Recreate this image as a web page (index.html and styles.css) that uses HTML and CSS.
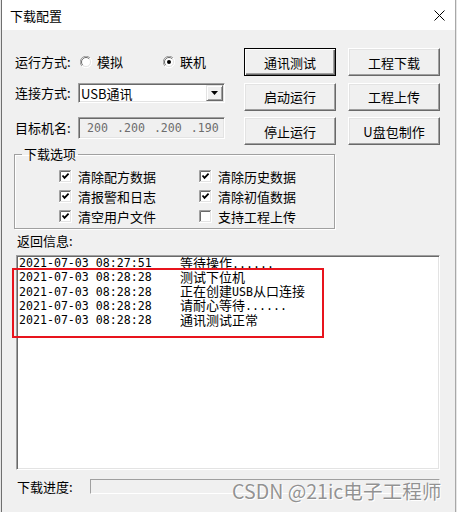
FILE: index.html
```html
<!doctype html>
<html lang="zh-CN">
<head>
<meta charset="utf-8" />
<title>下载配置</title>
<link rel="stylesheet" href="styles.css">
</head>
<body>
  <!-- 公用图形 -->
  <svg class="sprite" aria-hidden="true">
    <symbol id="cb" viewBox="0 0 13 13">
      <path d="M0.5 12 V0.5 H12" fill="none" stroke="#a0a0a0"/>
      <path d="M1.5 11 V1.5 H11" fill="none" stroke="#696969"/>
      <path d="M0 12.5 H12.5 V0" fill="none" stroke="#fff"/>
      <path d="M1 11.5 H11.5 V1" fill="none" stroke="#e3e3e3"/>
      <rect x="2" y="2" width="9" height="9" fill="#fff"/>
    </symbol>
    <symbol id="tick" viewBox="0 0 13 13">
      <path d="M3.5 5.5 L5.5 7.8 L9.6 3.6" fill="none" stroke="#000" stroke-width="1.8"/>
    </symbol>
    <symbol id="radio" viewBox="0 0 12 12">
      <circle cx="6" cy="6" r="5" fill="#fff"/>
      <path d="M1.9 10.1 A5.5 5.5 0 0 1 10.1 1.9" fill="none" stroke="#a0a0a0"/>
      <path d="M2.8 9.2 A4.5 4.5 0 0 1 9.2 2.8" fill="none" stroke="#696969"/>
      <path d="M10.1 1.9 A5.5 5.5 0 0 1 1.9 10.1" fill="none" stroke="#fff"/>
      <path d="M9.2 2.8 A4.5 4.5 0 0 1 2.8 9.2" fill="none" stroke="#e3e3e3"/>
    </symbol>
  </svg>

  <div class="window">
    <div class="titlebar">
      <span>下载配置</span>
      <svg class="close" width="11" height="11" viewBox="0 0 11 11"><path d="M0.5 0.5 L10.5 10.5 M10.5 0.5 L0.5 10.5" stroke="#000"/></svg>
    </div>

    <div class="client">
      <div class="top">
        <div class="form">
          <div class="row row1">
            <span class="label">运行方式:</span>
            <span class="option">
              <svg class="radio" width="12" height="12"><use href="#radio"/></svg>模拟
            </span>
            <span class="option">
              <svg class="radio" width="12" height="12"><use href="#radio"/><circle cx="6" cy="6" r="2" fill="#000"/></svg>联机
            </span>
          </div>
          <div class="row row2">
            <span class="label">连接方式:</span>
            <div class="combo">
              <span>USB通讯</span>
              <span class="drop"><svg width="7" height="4" viewBox="0 0 7 4"><path d="M0 0 H7 L3.5 4 Z" fill="#000"/></svg></span>
            </div>
          </div>
          <div class="row row3">
            <span class="label">目标机名:</span>
            <div class="ip">
              <span>200</span><span>.200</span><span>.200</span><span>.190</span>
            </div>
          </div>
        </div>

        <div class="buttons">
          <div class="btn default">通讯测试</div>
          <div class="btn">工程下载</div>
          <div class="btn">启动运行</div>
          <div class="btn">工程上传</div>
          <div class="btn">停止运行</div>
          <div class="btn">U盘包制作</div>
        </div>
      </div>

      <fieldset class="group">
        <legend>下载选项</legend>
        <div class="opts">
          <div class="opt"><svg width="13" height="13"><use href="#cb"/><use href="#tick"/></svg>清除配方数据</div>
          <div class="opt"><svg width="13" height="13"><use href="#cb"/><use href="#tick"/></svg>清除历史数据</div>
          <div class="opt"><svg width="13" height="13"><use href="#cb"/><use href="#tick"/></svg>清报警和日志</div>
          <div class="opt"><svg width="13" height="13"><use href="#cb"/><use href="#tick"/></svg>清除初值数据</div>
          <div class="opt"><svg width="13" height="13"><use href="#cb"/><use href="#tick"/></svg>清空用户文件</div>
          <div class="opt"><svg width="13" height="13"><use href="#cb"/></svg>支持工程上传</div>
        </div>
      </fieldset>

      <div class="info-label">返回信息:</div>
      <div class="log">
        <div class="line"><span class="ts">2021-07-03 08:27:51</span><span class="msg">等待操作<span class="mono">......</span></span></div>
        <div class="line"><span class="ts">2021-07-03 08:28:28</span><span class="msg">测试下位机</span></div>
        <div class="line"><span class="ts">2021-07-03 08:28:28</span><span class="msg">正在创建<span class="mono">USB</span>从口连接</span></div>
        <div class="line"><span class="ts">2021-07-03 08:28:28</span><span class="msg">请耐心等待<span class="mono">......</span></span></div>
        <div class="line"><span class="ts">2021-07-03 08:28:28</span><span class="msg">通讯测试正常</span></div>
      </div>

      <div class="progress-row">
        <span class="progress-label">下载进度:</span>
        <div class="progress"></div>
      </div>
    </div>

    <!-- 标注框 / 水印 -->
    <div class="highlight"></div>
    <div class="watermark">CSDN @21ic电子工程师</div>
  </div>
</body>
</html>
```

FILE: styles.css
```css
*{margin:0;padding:0;box-sizing:border-box}
body{
  height:512px;overflow:hidden;background:#e6e6e6;
  font-family:"Noto Sans CJK SC",sans-serif;font-size:13px;color:#000;
}
.sprite{position:absolute;width:0;height:0;overflow:hidden}

/* === 窗口 === */
.window{
  position:relative;width:455px;height:512px;margin-left:1px;
  background:#f0f0f0;border-left:1px solid #6f6f6f;border-right:1px solid #a8a8a8;
}
.titlebar{
  height:30px;background:#fff;
  display:flex;align-items:center;justify-content:space-between;
  padding:0 10px 0 8px;font-size:13px;
}
.client{padding:18px 15px 0 13px}

/* === 上部：表单 + 按钮 === */
.top{display:flex;justify-content:space-between}
.form{padding-top:2px}
.row{display:flex;align-items:center}
.row1{height:24px}
.row2{height:20px;margin-top:9px}
.row3{height:22px;margin-top:14px}
.label{width:63px;line-height:16px}
.option{display:flex;align-items:center;width:83px;padding-left:2px;line-height:16px}
.radio{margin-right:5px;flex:none}

.combo{
  width:147px;height:20px;background:#fff;
  display:flex;align-items:center;justify-content:space-between;
  padding:1px 1px 1px 2px;
  border:1px solid;border-color:#a0a0a0 #fff #fff #a0a0a0;
  box-shadow:inset 1px 1px 0 #696969,inset -1px -1px 0 #e3e3e3;
}
.drop{
  width:17px;height:16px;background:#f0f0f0;
  display:flex;align-items:center;justify-content:center;
  border:1px solid;border-color:#e3e3e3 #696969 #696969 #e3e3e3;
  box-shadow:inset 1px 1px 0 #fff,inset -1px -1px 0 #a0a0a0;
}
.ip{
  width:147px;height:22px;background:#f0f0f0;
  display:flex;align-items:center;gap:9px;padding-left:8px;
  border:1px solid;border-color:#a0a0a0 #fff #fff #a0a0a0;
  box-shadow:inset 1px 1px 0 #696969,inset -1px -1px 0 #e3e3e3;
  font-family:"DejaVu Sans Mono",monospace;font-size:11.6px;color:#6d6d6d;
}

.buttons{display:grid;grid-template-columns:92px 92px;column-gap:12px;row-gap:6.5px}
.btn{
  height:28px;background:#f0f0f0;
  display:flex;align-items:center;justify-content:center;
  border:1px solid;border-color:#fff #696969 #696969 #fff;
  box-shadow:inset -1px -1px 0 #a0a0a0,inset 1px 1px 0 #e3e3e3;
}
.btn.default{
  border-color:#000;
  box-shadow:inset 1px 1px 0 #fff,inset -1px -1px 0 #696969,inset -2px -2px 0 #a0a0a0;
}

/* === 下载选项 === */
.group{
  width:321px;margin:1px 0 0 -1px;padding:0;min-width:0;
  border:1px solid #a0a0a0;
  box-shadow:inset 1px 1px 0 #fff,1px 1px 0 #fff;
}
.group legend{margin-left:7px;padding:0 2px;line-height:16px}
.opts{display:grid;grid-template-columns:140px 1fr;padding:4px 0 2px 44px}
.opt{display:flex;align-items:center;gap:6px;height:20px}
.opt svg{flex:none}

/* === 返回信息 === */
.info-label{margin:4px 0 0 2px;line-height:16px}
.log{
  height:215px;margin:6px 0 0 1px;background:#fff;padding-left:2px;
  border:1px solid;border-color:#a0a0a0 #fff #fff #a0a0a0;
  box-shadow:inset 1px 1px 0 #696969,inset -1px -1px 0 #e3e3e3;
}
.line{display:flex;align-items:center;height:14.25px;white-space:pre}
.ts{width:161px;flex:none}
.ts,.mono{font-family:"DejaVu Sans Mono",monospace;font-size:11.6px;line-height:12px}
.msg{line-height:12px}

/* === 下载进度 === */
.progress-row{display:flex;align-items:center;height:15px;margin-top:9px}
.progress-label{width:75px;padding-left:2px;line-height:16px}
.progress{
  flex:1;height:15px;
  border:1px solid;border-color:#a0a0a0 #fff #fff #a0a0a0;
}

/* === 标注 / 水印 === */
.highlight{
  position:absolute;left:10px;top:268px;width:312px;height:70px;
  border:2px solid #e8141d;
}
.watermark{
  position:absolute;left:230px;top:479px;
  font-size:19.6px;line-height:24px;color:rgba(110,110,110,.75);
  text-shadow:0 0 1px #fff,1px 1px 0 #fff;white-space:nowrap;
}
```
